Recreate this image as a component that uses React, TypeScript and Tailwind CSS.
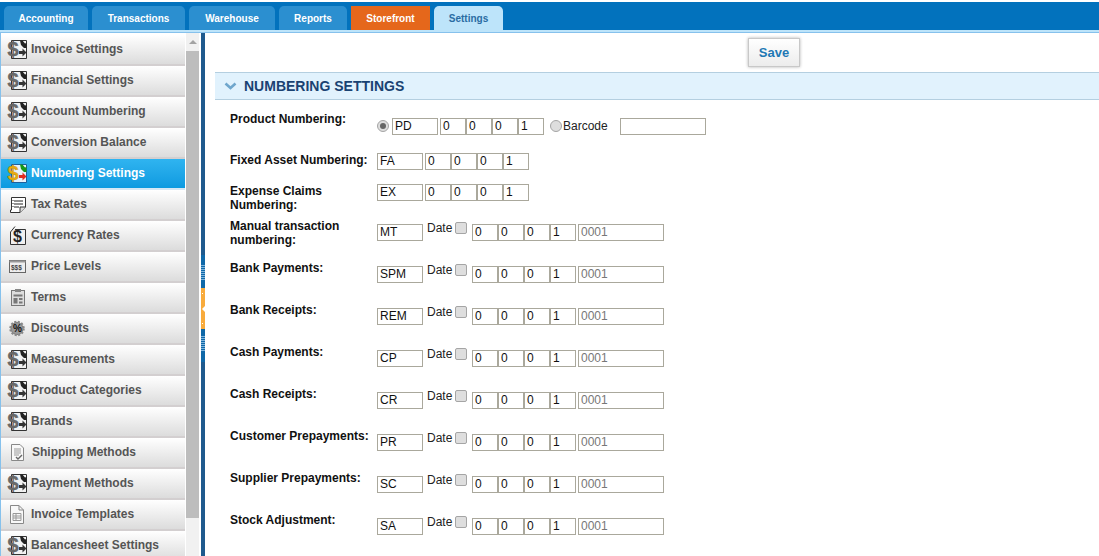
import React from 'react';

const font = { fontFamily: '"Liberation Sans", Arial, sans-serif' };

function MoneyIcon({ active }: { active?: boolean }) {
  return (
    <svg width="19" height="19" viewBox="0 0 19 19" className="shrink-0 overflow-visible">
      <path d="M3.5 0.5H18.5V18.5H3.5Z" fill={active ? '#e8f2fa' : '#f2f2f2'} stroke={active ? '#1d5f9c' : '#333'} />
      <path d="M12 0.5H14.5L17 3.5L18.5 3V8H16L13 5Z" fill={active ? '#16991a' : '#222'} />
      <path d="M11 11H14.5V8.5L18.5 12.5L14.5 16.5V14H11Z" fill={active ? '#e02b20' : '#333'} />
      <text x="-0.5" y="16" fontSize="20" fontWeight="700" fontFamily="Liberation Sans" fill={active ? '#e9ad10' : '#6a6a6a'} stroke={active ? '#b98708' : '#555'} strokeWidth="0.4">$</text>
    </svg>
  );
}

function TaxIcon() {
  return (
    <svg width="19" height="19" viewBox="0 0 19 19" className="shrink-0">
      <path d="M3.5 2.5H17.5V12L12 17.5H2.5V15H3.5Z" fill="#fff" stroke="#333" />
      <path d="M12 17.5V12H17.5" fill="#ddd" stroke="#333" />
      <path d="M6 6H15M6 9H15M6 12H11" stroke="#222" />
      <path d="M4.5 5.5H5.5M4.5 8.5H5.5M4.5 11.5H5.5" stroke="#222" />
    </svg>
  );
}

function RateIcon() {
  return (
    <svg width="19" height="19" viewBox="0 0 19 19" className="shrink-0 overflow-visible">
      <path d="M7 0.5 L2.5 6V18.5H17.5V3.5H7" fill="#f0f0f0" stroke="#333" />
      <text x="5" y="16" fontSize="16" fontWeight="700" fontFamily="Liberation Sans" fill="#222">$</text>
    </svg>
  );
}

function PriceIcon() {
  return (
    <svg width="19" height="19" viewBox="0 0 19 19" className="shrink-0 overflow-visible">
      <rect x="1.5" y="3.5" width="16" height="12" fill="#eee" stroke="#666" />
      <rect x="1.5" y="3.5" width="16" height="2" fill="#999" />
      <text x="3" y="13" fontSize="6.5" fontWeight="700" fontFamily="Liberation Sans" fill="#444">$$$</text>
    </svg>
  );
}

function TermsIcon() {
  return (
    <svg width="19" height="19" viewBox="0 0 19 19" className="shrink-0">
      <rect x="3.5" y="2.5" width="13" height="15" fill="#ddd" stroke="#777" />
      <rect x="7" y="1" width="6" height="3" fill="#888" />
      <path d="M5.5 6.5H14.5V8.5H5.5ZM5.5 10H9.5V15.5H5.5ZM11 10H14.5V12H11ZM11 13.5H14.5V15.5H11Z" fill="#777" />
    </svg>
  );
}

function DiscountIcon() {
  return (
    <svg width="19" height="19" viewBox="0 0 19 19" className="shrink-0 overflow-visible">
      <circle cx="9" cy="9.5" r="6.5" fill="#777" stroke="#888" strokeWidth="2.5" strokeDasharray="2 1.4" />
      <circle cx="9" cy="9.5" r="5.5" fill="#999" />
      <text x="5" y="13" fontSize="10" fontWeight="700" fontFamily="Liberation Sans" fill="#111">%</text>
    </svg>
  );
}

function ShipIcon() {
  return (
    <svg width="19" height="19" viewBox="0 0 19 19" className="shrink-0">
      <path d="M3.5 1.5H12L15.5 5V17.5H3.5Z" fill="#f8f8f8" stroke="#888" />
      <path d="M6 6H13M6 8H13M6 10H13M6 12H11" stroke="#999" />
      <path d="M8 14L10 16L14 12" fill="none" stroke="#666" strokeWidth="1.4" />
    </svg>
  );
}

function TemplateIcon() {
  return (
    <svg width="19" height="19" viewBox="0 0 19 19" className="shrink-0">
      <path d="M2.5 0.5H11L15.5 5V18.5H2.5Z" fill="#f8f8f8" stroke="#888" />
      <path d="M11 0.5V5H15.5" fill="none" stroke="#888" />
      <path d="M5 8.5H13V15.5H5ZM5 11H13M5 13H13M8 8.5V15.5" fill="none" stroke="#999" />
    </svg>
  );
}

const sideItems: { label: string; icon: React.ReactNode; active?: boolean; shift?: boolean }[] = [
  { label: 'Invoice Settings', icon: <MoneyIcon /> },
  { label: 'Financial Settings', icon: <MoneyIcon /> },
  { label: 'Account Numbering', icon: <MoneyIcon /> },
  { label: 'Conversion Balance', icon: <MoneyIcon /> },
  { label: 'Numbering Settings', icon: <MoneyIcon active />, active: true },
  { label: 'Tax Rates', icon: <TaxIcon /> },
  { label: 'Currency Rates', icon: <RateIcon /> },
  { label: 'Price Levels', icon: <PriceIcon /> },
  { label: 'Terms', icon: <TermsIcon /> },
  { label: 'Discounts', icon: <DiscountIcon /> },
  { label: 'Measurements', icon: <MoneyIcon /> },
  { label: 'Product Categories', icon: <MoneyIcon /> },
  { label: 'Brands', icon: <MoneyIcon /> },
  { label: 'Shipping Methods', icon: <ShipIcon />, shift: true },
  { label: 'Payment Methods', icon: <MoneyIcon /> },
  { label: 'Invoice Templates', icon: <TemplateIcon /> },
  { label: 'Balancesheet Settings', icon: <MoneyIcon /> },
];

const tabs = [
  { label: 'Accounting', w: 'w-[84px]' },
  { label: 'Transactions', w: 'w-[93px]' },
  { label: 'Warehouse', w: 'w-[86px]' },
  { label: 'Reports', w: 'w-[68px]' },
];

function Box({ value, w = 'w-[26px]', grey }: { value?: string; w?: string; grey?: boolean }) {
  return (
    <div
      className={`${w} h-[17px] shrink-0 border border-[#aaa89c] bg-white pl-[2px] text-[12px] leading-[14px] ${
        grey ? 'text-[#777]' : 'text-[#111]'
      }`}
    >
      {value}
    </div>
  );
}

function Counters() {
  return (
    <div className="flex">
      <Box value="0" />
      <Box value="0" />
      <Box value="0" />
      <Box value="1" />
    </div>
  );
}

function Radio({ on }: { on?: boolean }) {
  return (
    <div className="w-[12px] h-[12px] shrink-0 rounded-full border border-[#a5a5a5] bg-[#dedede] flex items-center justify-center">
      {on && <div className="w-[6px] h-[6px] rounded-full bg-[#666]" />}
    </div>
  );
}

function Label({ children }: { children: React.ReactNode }) {
  return <div className="w-[147px] shrink-0 text-[12px] leading-[14px] font-bold text-[#111]">{children}</div>;
}

function DateRow({ label, code }: { label: React.ReactNode; code: string }) {
  return (
    <div className="flex h-[42px] items-start">
      <Label>{label}</Label>
      <div className="mt-[5px]">
        <Box value={code} w="w-[46px]" />
      </div>
      <div className="ml-[4px] mt-[2px] w-[28px] text-[12px] leading-[14px] text-[#222]">Date</div>
      <div className="mt-[3px] w-[12px] h-[12px] rounded-[2px] border border-[#a5a5a5] bg-[#dedede]" />
      <div className="ml-[5px] mt-[5px] flex">
        <Counters />
        <div className="ml-[2px]">
          <Box value="0001" w="w-[86px]" grey />
        </div>
      </div>
    </div>
  );
}

function Grip() {
  return <div className="h-[16px] bg-[repeating-linear-gradient(to_bottom,#7fb4dc_0px,#7fb4dc_1px,#0f68a8_1px,#0f68a8_2px)]" />;
}

export default function App() {
  return (
    <div className="w-[1099px] h-[556px] overflow-hidden bg-white flex flex-col" style={font}>
      {/* Tabs */}
      <div className="mt-[2px] h-[28px] shrink-0 bg-[#0272bd] flex items-end pl-[4px] gap-[4px]">
        {tabs.map(t => (
          <div
            key={t.label}
            className={`${t.w} h-[24px] rounded-t-[5px] bg-[#2b8fd0] pt-[1px] text-center text-[10px] font-bold leading-[24px] text-white`}
          >
            {t.label}
          </div>
        ))}
        <div className="w-[79px] h-[24px] bg-[#e5671b] pt-[1px] text-center text-[10px] font-bold leading-[24px] text-white">
          Storefront
        </div>
        <div className="w-[69px] h-[24px] rounded-t-[5px] bg-[#bde4fa] pt-[1px] text-center text-[10px] font-bold leading-[24px] text-[#2a6ca3]">
          Settings
        </div>
      </div>
      <div className="h-[3px] shrink-0 bg-[#bde4fa] border-b border-[#86c1ec]" />

      <div className="flex flex-1 min-h-0">
        {/* Sidebar */}
        <div className="w-[185px] shrink-0 border-l border-[#86c1ec] overflow-hidden bg-white pt-[2px]">
          {sideItems.map(item => (
            <div
              key={item.label}
              className={`h-[31px] flex items-center gap-[4px] pl-[7px] pb-[1px] border-b-2 text-[12px] font-bold ${
                item.active
                  ? 'bg-gradient-to-b from-[#2fb4f0] to-[#0b9ae0] border-[#d5e8f5] text-white'
                  : 'bg-gradient-to-b from-white to-[#dcdcdc] border-[#d3cfd0] text-[#555]'
              }`}
            >
              {item.icon}
              <span className={item.shift ? 'ml-[1px]' : ''}>{item.label}</span>
            </div>
          ))}
        </div>

        {/* Scrollbar */}
        <div className="w-[13px] shrink-0 ml-[1px] bg-[#f1f1f1] flex flex-col">
          <div className="h-[18px] shrink-0 flex items-center justify-center">
            <div className="w-0 h-0 border-x-[4px] border-x-transparent border-b-[4px] border-b-[#a3a3a3]" />
          </div>
          <div className="h-[467px] bg-[#bdbdbd]" />
        </div>

        {/* Splitter */}
        <div className="w-[4px] shrink-0 ml-[2px] bg-[#1f5a8e] flex flex-col">
          <div className="mt-[222px] h-[33px] pt-[10px] bg-[#0f68a8]">
            <Grip />
          </div>
          <div className="relative h-[41px] bg-[#f8ab3c] flex items-center justify-center">
            <div className="w-0 h-0 border-y-[3px] border-y-transparent border-r-[3px] border-r-white" />
            <div className="absolute top-[5px] left-[1px] w-[1px] h-[1px] bg-white" />
            <div className="absolute bottom-[5px] left-[1px] w-[1px] h-[1px] bg-white" />
          </div>
          <div className="h-[33px] pt-[7px] bg-[#0f68a8]">
            <Grip />
          </div>
        </div>

        {/* Main */}
        <div className="flex-1 min-w-0">
          <div className="h-[39px] flex items-start justify-end pr-[299px] pt-[5px]">
            <button className="w-[52px] h-[29px] border border-[#c8c8c8] bg-gradient-to-b from-white to-[#ececec] text-[13px] font-bold text-[#1f78b4] shadow-[0_0_3px_rgba(0,0,0,0.3)]">
              Save
            </button>
          </div>
          <div className="ml-[10px] h-[28px] border-y border-[#b4cfe0] bg-[#e1f2fd] flex items-center pl-[9px] gap-[7px]">
            <svg width="13" height="9" viewBox="0 0 13 9">
              <path d="M1.5 1.5L6.5 6L11.5 1.5" fill="none" stroke="#6fa6cc" strokeWidth="2.6" />
            </svg>
            <span className="text-[14px] font-bold text-[#1a4272]">NUMBERING SETTINGS</span>
          </div>

          <div className="pl-[25px] pt-[12px]">
            {/* Product numbering */}
            <div className="flex h-[41px] items-start">
              <Label>Product Numbering:</Label>
              <div className="mt-[5px] flex items-center">
                <Radio on />
                <div className="ml-[3px] flex items-center">
                  <Box value="PD" w="w-[46px]" />
                  <div className="ml-[2px]">
                    <Counters />
                  </div>
                  <div className="ml-[6px]">
                    <Radio />
                  </div>
                  <span className="ml-[1px] w-[57px] text-[12px] text-[#222]">Barcode</span>
                  <Box w="w-[86px]" />
                </div>
              </div>
            </div>

            {/* Fixed asset */}
            <div className="flex h-[31px] items-start">
              <Label>Fixed Asset Numbering:</Label>
              <Box value="FA" w="w-[46px]" />
              <div className="ml-[2px]">
                <Counters />
              </div>
            </div>

            {/* Expense claims */}
            <div className="flex h-[35px] items-start">
              <Label>
                Expense Claims
                <br />
                Numbering:
              </Label>
              <Box value="EX" w="w-[46px]" />
              <div className="ml-[2px]">
                <Counters />
              </div>
            </div>

            <DateRow
              label={
                <>
                  Manual transaction
                  <br />
                  numbering:
                </>
              }
              code="MT"
            />
            <DateRow label="Bank Payments:" code="SPM" />
            <DateRow label="Bank Receipts:" code="REM" />
            <DateRow label="Cash Payments:" code="CP" />
            <DateRow label="Cash Receipts:" code="CR" />
            <DateRow label="Customer Prepayments:" code="PR" />
            <DateRow label="Supplier Prepayments:" code="SC" />
            <DateRow label="Stock Adjustment:" code="SA" />
          </div>
        </div>
      </div>
    </div>
  );
}
